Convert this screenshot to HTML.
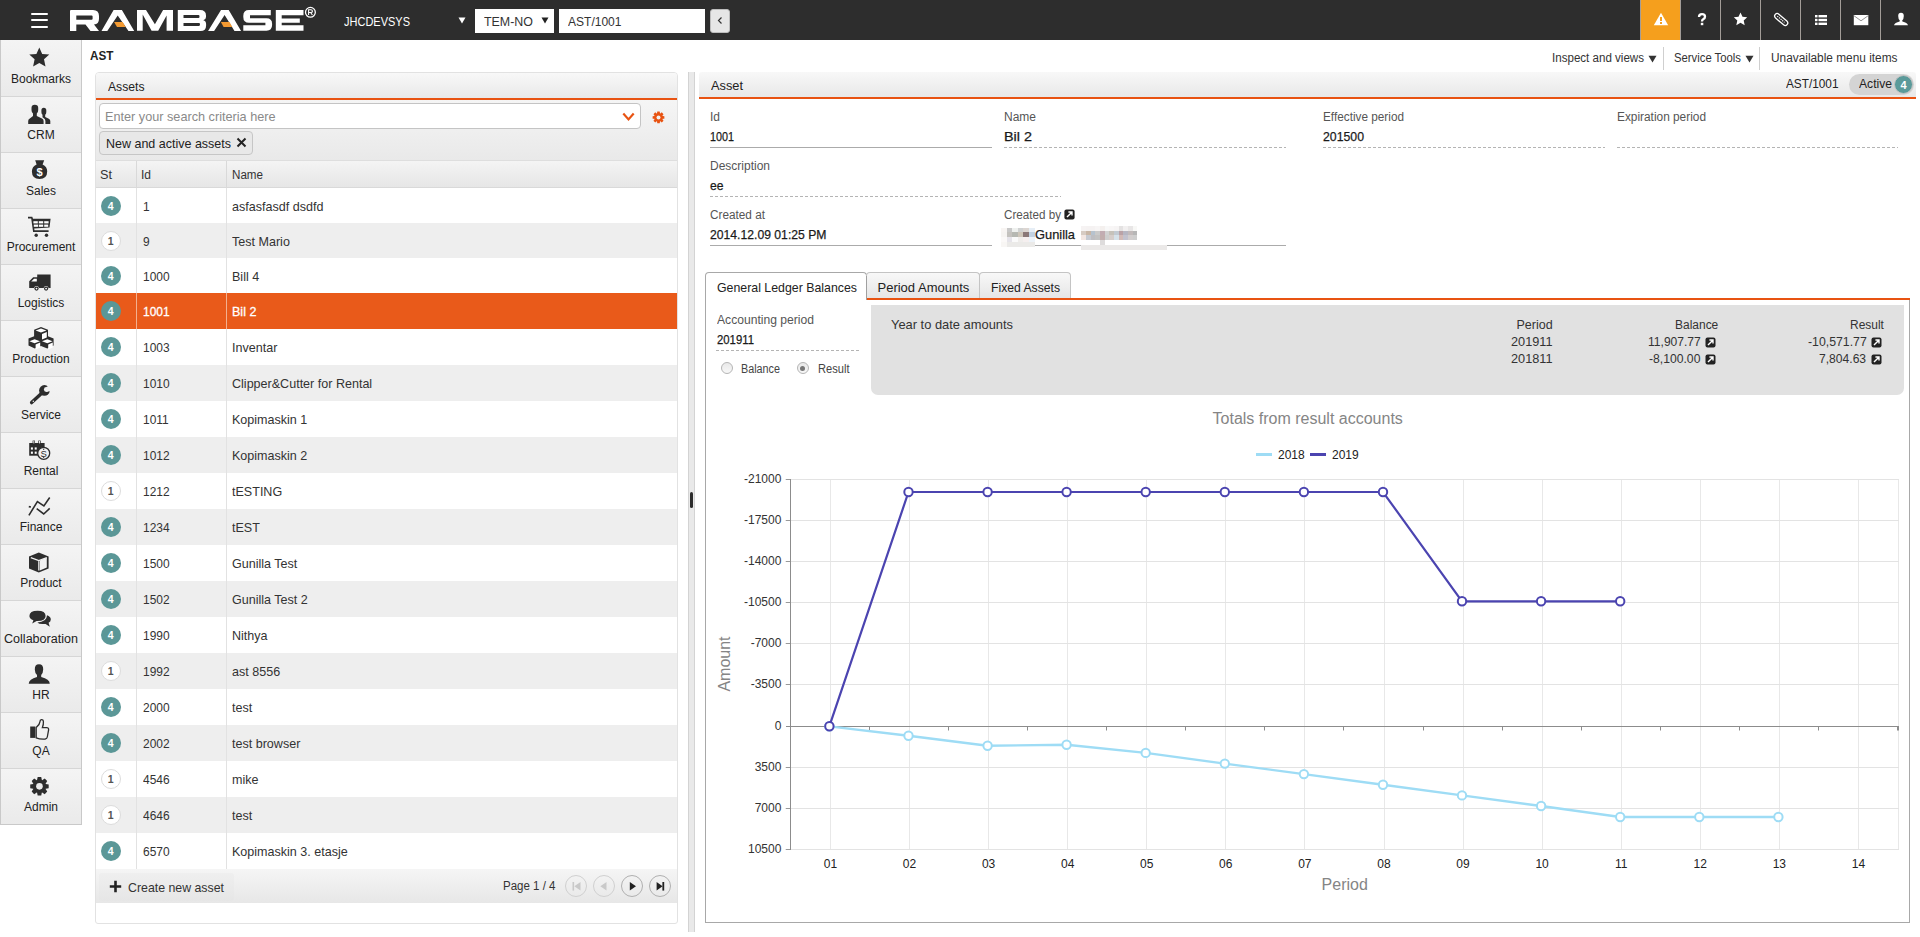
<!DOCTYPE html><html><head><meta charset='utf-8'><style>
*{box-sizing:border-box;margin:0;padding:0}
html,body{width:1920px;height:937px;overflow:hidden;background:#fff;font-family:"Liberation Sans",sans-serif;color:#333}
.a,.t,svg.s{position:absolute}
.t{white-space:pre}
</style></head><body><div class='a' style='left:0px;top:0px;width:1920px;height:40px;background:#2d2d2d'></div><div class='a' style='left:31px;top:12.6px;width:17px;height:2.1px;background:#fff;border-radius:1px'></div><div class='a' style='left:31px;top:19.1px;width:17px;height:2.1px;background:#fff;border-radius:1px'></div><div class='a' style='left:31px;top:25.6px;width:17px;height:2.1px;background:#fff;border-radius:1px'></div><svg class='s' style='left:0;top:0' width='330' height='40' viewBox='0 0 330 40'>
<g fill='#fff' fill-rule='evenodd'>
<path d='M70,11 Q70,10 71,10 L93,10 Q99,10 99,16 L99,18.8 Q99,24.2 94,24.6 L99,31 L90.5,31 L85.5,24.6 L76.3,24.6 L76.3,31 L70,31 Z M76.3,15.5 L91.6,15.5 Q92.6,15.5 92.6,16.6 L92.6,18.7 Q92.6,19.75 91.6,19.75 L76.3,19.75 Z'/>
<path d='M101.5,31 L113.6,10 L121.9,10 L134.2,31 L128.5,31 L117.7,15.5 L107.3,31 Z'/>
<path d='M137,10 L146,10 L154.9,24.2 L163.1,10 L173,10 L173,30.8 L166.6,30.8 L166.6,15.6 L158.2,30.8 L151.6,30.8 L142.7,14.4 L142.7,30.8 L137,30.8 Z'/>
<path d='M177.8,10 L200,10 Q206,10 206,15.5 L206,17 Q206,19.6 203.3,20.3 Q206.1,21.1 206.1,24 L206.1,25.5 Q206.1,31 200.5,31 L177.8,31 Z M183.5,15.1 L198.5,15.1 Q199.5,15.1 199.5,16.5 Q199.5,18 198.5,18 L183.5,18 Z M183.5,23 L199,23 Q200,23 200,24.45 Q200,25.9 199,25.9 L183.5,25.9 Z'/>
<path d='M208.1,31 L221,10 L228.7,10 L241.1,31 L234.5,31 L224.6,14.9 L214.1,31 Z'/>
<path d='M249,10 L270.8,10 L270.8,15.25 L250,15.25 L250,18.2 L266.5,18.2 Q272.1,18.2 272.1,23.7 L272.1,25 Q272.1,30.7 266.5,30.7 L243.3,30.7 L243.3,25.25 L265.4,25.25 L265.4,22.75 L249,22.75 Q243.3,22.75 243.3,17 L243.3,15.7 Q243.3,10 249,10 Z'/>
<path d='M275.8,10 L303.5,10 L303.5,15.25 L281.7,15.25 L281.7,18.4 L299.8,18.4 L299.8,22.75 L281.7,22.75 L281.7,25.25 L303.5,25.25 L303.5,30.7 L275.8,30.7 Z'/>
</g>
<g fill='#f39a32'>
<path d='M114.1,22 L122.7,22 L125.6,26.9 L117,26.9 Z'/>
<path d='M220.8,21.9 L229.4,21.9 L232.3,27 L223.6,27 Z'/>
</g>
<circle cx='310.4' cy='12.3' r='4.9' fill='none' stroke='#fff' stroke-width='1.3'/>
<path d='M308.6,15 L308.6,9.8 L311,9.8 Q312.4,9.8 312.4,11.2 Q312.4,12.5 311,12.5 L308.6,12.5 M310.6,12.5 L312.4,15' fill='none' stroke='#fff' stroke-width='1.1'/>
</svg><span class='t' style='left:344.00px;top:16px;font-size:12.5px;line-height:12.5px;color:#fff;font-weight:400;transform:scaleX(0.8796);transform-origin:0 0;'>JHCDEVSYS</span><svg class='s' style='left:458px;top:17px' width='8' height='7' viewBox='0 0 8 7'><path d='M0.5,0.5 L7.5,0.5 L4,6.5 Z' fill='#fff'/></svg><div class='a' style='left:475px;top:9px;width:79px;height:24px;background:#fff'></div><span class='t' style='left:484.00px;top:16px;font-size:12.5px;line-height:12.5px;color:#333;font-weight:400;transform:scaleX(0.9937);transform-origin:0 0;'>TEM-NO</span><svg class='s' style='left:541px;top:17px' width='8' height='7' viewBox='0 0 8 7'><path d='M0.5,0.5 L7.5,0.5 L4,6.5 Z' fill='#222'/></svg><div class='a' style='left:559px;top:9px;width:146px;height:24px;background:#fff'></div><span class='t' style='left:567.50px;top:16px;font-size:12.5px;line-height:12.5px;color:#333;font-weight:400;transform:scaleX(0.9623);transform-origin:0 0;'>AST/1001</span><div class='a' style='left:710px;top:9px;width:20px;height:24px;background:#e6e6e6;border:1px solid #bdbdbd;border-radius:3px'></div><svg class='s' style='left:716px;top:16px' width='8' height='9' viewBox='0 0 8 9'><path d='M5.5,1.5 L2.5,4.5 L5.5,7.5' fill='none' stroke='#333' stroke-width='1.2'/></svg><div class='a' style='left:1641px;top:0px;width:39px;height:40px;background:#f59f1d'></div><div class='a' style='left:1640px;top:0px;width:1px;height:40px;background:#a39d98'></div><div class='a' style='left:1680px;top:0px;width:1px;height:40px;background:#a39d98'></div><div class='a' style='left:1720px;top:0px;width:1px;height:40px;background:#a39d98'></div><div class='a' style='left:1760px;top:0px;width:1px;height:40px;background:#a39d98'></div><div class='a' style='left:1800px;top:0px;width:1px;height:40px;background:#a39d98'></div><div class='a' style='left:1840px;top:0px;width:1px;height:40px;background:#a39d98'></div><div class='a' style='left:1880px;top:0px;width:1px;height:40px;background:#a39d98'></div>
<svg class='s' style='left:1653px;top:12px' width='16' height='14' viewBox='0 0 16 14'><path d='M8,0.8 L15.2,13.2 L0.8,13.2 Z' fill='#fff'/><rect x='7' y='5' width='2' height='4' fill='#f59f1d'/><rect x='7' y='10' width='2' height='2' fill='#f59f1d'/></svg>
<svg class='s' style='left:1697px;top:13px' width='10' height='13' viewBox='0 0 10 13'><path d='M2,4 Q2,1.2 5,1.2 Q8,1.2 8,3.8 Q8,5.4 6.2,6.3 Q5,7 5,8.5' fill='none' stroke='#fff' stroke-width='2.3'/><rect x='3.8' y='9.8' width='2.5' height='2.4' fill='#fff'/></svg>
<svg class='s' style='left:1733px;top:12px' width='15' height='14' viewBox='0 0 15 14'><path d='M7.5,0.6 L9.5,4.8 L14.2,5.3 L10.7,8.4 L11.7,13.2 L7.5,10.8 L3.3,13.2 L4.3,8.4 L0.8,5.3 L5.5,4.8 Z' fill='#fff'/></svg>
<svg class='s' style='left:1772px;top:11px' width='18' height='17' viewBox='1772 11 18 17'><g transform='rotate(41 1781.2 19.5)'><rect x='1773.4' y='17' width='15.6' height='5' rx='2.5' fill='none' stroke='#fff' stroke-width='1.3'/><path d='M1776,19.5 L1785.6,19.5' stroke='#fff' stroke-width='1.1' stroke-dasharray='1.3 0.9'/></g></svg>
<svg class='s' style='left:1814px;top:14px' width='14' height='12' viewBox='0 0 14 12'><g fill='#fff'><rect x='1' y='1' width='2.5' height='2.4'/><rect x='4.5' y='1' width='8.5' height='2.4'/><rect x='1' y='4.8' width='2.5' height='2.4'/><rect x='4.5' y='4.8' width='8.5' height='2.4'/><rect x='1' y='8.6' width='2.5' height='2.4'/><rect x='4.5' y='8.6' width='8.5' height='2.4'/></g></svg>
<svg class='s' style='left:1853px;top:14px' width='16' height='12' viewBox='0 0 16 12'><rect x='0.8' y='1' width='14.5' height='10.2' fill='#fff'/><path d='M0.8,1.6 L8,6.8 L15.3,1.6' fill='none' stroke='#888' stroke-width='0.9'/></svg>
<svg class='s' style='left:1893px;top:12px' width='16' height='14' viewBox='0 0 16 14'><path d='M8,0.8 Q10.8,0.8 10.8,4 Q10.8,7 9.2,8.4 L9.4,9.4 Q14.3,10.6 15,13.2 L1,13.2 Q1.7,10.6 6.6,9.4 L6.8,8.4 Q5.2,7 5.2,4 Q5.2,0.8 8,0.8 Z' fill='#fff'/></svg>
<span class='t' style='left:1552.00px;top:52px;font-size:12px;line-height:12px;color:#333;font-weight:400;transform:scaleX(0.9645);transform-origin:0 0;'>Inspect and views</span><svg class='s' style='left:1648px;top:55px' width='9' height='8' viewBox='0 0 9 8'><path d='M0.5,0.8 L8.5,0.8 L4.5,7.5 Z' fill='#333'/></svg><div class='a' style='left:1663px;top:47px;width:1px;height:23px;background:#cfcfcf'></div><span class='t' style='left:1674.00px;top:52px;font-size:12px;line-height:12px;color:#333;font-weight:400;transform:scaleX(0.9416);transform-origin:0 0;'>Service Tools</span><svg class='s' style='left:1745px;top:55px' width='9' height='8' viewBox='0 0 9 8'><path d='M0.5,0.8 L8.5,0.8 L4.5,7.5 Z' fill='#333'/></svg><div class='a' style='left:1759px;top:47px;width:1px;height:23px;background:#cfcfcf'></div><span class='t' style='left:1771.00px;top:52px;font-size:12px;line-height:12px;color:#333;font-weight:400;transform:scaleX(0.9878);transform-origin:0 0;'>Unavailable menu items</span><span class='t' style='left:90.00px;top:49px;font-size:13px;line-height:13px;color:#222;font-weight:700;transform:scaleX(0.9038);transform-origin:0 0;'>AST</span><div class='a' style='left:0px;top:40px;width:82px;height:785px;background:#f2f2f2;border-left:1px solid #c9c9c9;border-right:1px solid #c9c9c9;border-bottom:1px solid #c9c9c9'></div><div class='a' style='left:1px;top:40px;width:80px;height:56px;background:linear-gradient(#f4f4f4,#eaeaea)'></div><div class='a' style='left:1px;top:96px;width:80px;height:1px;background:#d6d6d6'></div><span class='t' style='left:10.98px;top:73px;font-size:12px;line-height:12px;color:#222;font-weight:400;'>Bookmarks</span><div class='a' style='left:1px;top:97px;width:80px;height:55px;background:linear-gradient(#f4f4f4,#eaeaea)'></div><div class='a' style='left:1px;top:152px;width:80px;height:1px;background:#d6d6d6'></div><span class='t' style='left:27.34px;top:129px;font-size:12px;line-height:12px;color:#222;font-weight:400;'>CRM</span><div class='a' style='left:1px;top:153px;width:80px;height:55px;background:linear-gradient(#f4f4f4,#eaeaea)'></div><div class='a' style='left:1px;top:208px;width:80px;height:1px;background:#d6d6d6'></div><span class='t' style='left:25.98px;top:185px;font-size:12px;line-height:12px;color:#222;font-weight:400;'>Sales</span><div class='a' style='left:1px;top:209px;width:80px;height:55px;background:linear-gradient(#f4f4f4,#eaeaea)'></div><div class='a' style='left:1px;top:264px;width:80px;height:1px;background:#d6d6d6'></div><span class='t' style='left:6.65px;top:241px;font-size:12px;line-height:12px;color:#222;font-weight:400;'>Procurement</span><div class='a' style='left:1px;top:265px;width:80px;height:55px;background:linear-gradient(#f4f4f4,#eaeaea)'></div><div class='a' style='left:1px;top:320px;width:80px;height:1px;background:#d6d6d6'></div><span class='t' style='left:17.66px;top:297px;font-size:12px;line-height:12px;color:#222;font-weight:400;'>Logistics</span><div class='a' style='left:1px;top:321px;width:80px;height:55px;background:linear-gradient(#f4f4f4,#eaeaea)'></div><div class='a' style='left:1px;top:376px;width:80px;height:1px;background:#d6d6d6'></div><span class='t' style='left:12.31px;top:353px;font-size:12px;line-height:12px;color:#222;font-weight:400;'>Production</span><div class='a' style='left:1px;top:377px;width:80px;height:55px;background:linear-gradient(#f4f4f4,#eaeaea)'></div><div class='a' style='left:1px;top:432px;width:80px;height:1px;background:#d6d6d6'></div><span class='t' style='left:20.99px;top:409px;font-size:12px;line-height:12px;color:#222;font-weight:400;'>Service</span><div class='a' style='left:1px;top:433px;width:80px;height:55px;background:linear-gradient(#f4f4f4,#eaeaea)'></div><div class='a' style='left:1px;top:488px;width:80px;height:1px;background:#d6d6d6'></div><span class='t' style='left:23.66px;top:465px;font-size:12px;line-height:12px;color:#222;font-weight:400;'>Rental</span><div class='a' style='left:1px;top:489px;width:80px;height:55px;background:linear-gradient(#f4f4f4,#eaeaea)'></div><div class='a' style='left:1px;top:544px;width:80px;height:1px;background:#d6d6d6'></div><span class='t' style='left:19.65px;top:521px;font-size:12px;line-height:12px;color:#222;font-weight:400;'>Finance</span><div class='a' style='left:1px;top:545px;width:80px;height:55px;background:linear-gradient(#f4f4f4,#eaeaea)'></div><div class='a' style='left:1px;top:600px;width:80px;height:1px;background:#d6d6d6'></div><span class='t' style='left:20.32px;top:577px;font-size:12px;line-height:12px;color:#222;font-weight:400;'>Product</span><div class='a' style='left:1px;top:601px;width:80px;height:55px;background:linear-gradient(#f4f4f4,#eaeaea)'></div><div class='a' style='left:1px;top:656px;width:80px;height:1px;background:#d6d6d6'></div><span class='t' style='left:4.00px;top:633px;font-size:12px;line-height:12px;color:#222;font-weight:400;transform:scaleX(1.0464);transform-origin:0 0;'>Collaboration</span><div class='a' style='left:1px;top:657px;width:80px;height:55px;background:linear-gradient(#f4f4f4,#eaeaea)'></div><div class='a' style='left:1px;top:712px;width:80px;height:1px;background:#d6d6d6'></div><span class='t' style='left:32.33px;top:689px;font-size:12px;line-height:12px;color:#222;font-weight:400;'>HR</span><div class='a' style='left:1px;top:713px;width:80px;height:55px;background:linear-gradient(#f4f4f4,#eaeaea)'></div><div class='a' style='left:1px;top:768px;width:80px;height:1px;background:#d6d6d6'></div><span class='t' style='left:32.33px;top:745px;font-size:12px;line-height:12px;color:#222;font-weight:400;'>QA</span><div class='a' style='left:1px;top:769px;width:80px;height:55px;background:linear-gradient(#f4f4f4,#eaeaea)'></div><span class='t' style='left:23.99px;top:801px;font-size:12px;line-height:12px;color:#222;font-weight:400;'>Admin</span><svg class='s' style='left:0;top:40px' width='82' height='785' viewBox='0 40 82 785'>
<g fill='#2d2d2d'>
<path d='M39.3,47.6 L42.2,53.9 L49.3,54.6 L44,59.3 L45.5,66.6 L39.3,63 L33.1,66.6 L34.6,59.3 L29.3,54.6 L36.4,53.9 Z'/>
<path d='M31.5,107.8 Q31.5,104.8 34.8,104.8 Q38.2,104.8 38.2,107.8 L38.2,110 Q38.2,112.5 36.8,113.5 L36.8,116 L42,118.5 Q43.6,119.3 43.6,121 L43.6,124 L28.2,124 L28.2,121 Q28.2,119.3 29.8,118.5 L33,116 L33,113.5 Q31.5,112.5 31.5,110 Z'/>
<path d='M41.4,110.3 Q41.4,107.7 43.8,107.7 Q46.3,107.7 46.3,110.3 L46.3,112 Q46.3,114 45.2,114.8 L45.2,117 L48.8,118.8 Q50.3,119.5 50.3,121 L50.3,124 L45.4,124 L45.4,121 Q45.4,119 43.5,118 L42.5,117.3 L42.5,114.8 Q41.4,114 41.4,112 Z'/>
<path d='M35.2,160.2 L44.2,160.2 L42.6,164.6 Q47.2,166.6 47.2,171.6 Q47.2,179 39.5,179 Q31.9,179 31.9,171.6 Q31.9,166.6 36.6,164.6 Z'/>
<path d='M28,216.8 L32.3,216.8 L33,218.7 L50.6,218.7 L49.5,227.5 L34.2,228.4 L34.5,230.3 L48.6,230.3 L48.6,232 L33.1,232 L31.2,218.5 L28,218.5 Z'/>
<circle cx='36.2' cy='235.2' r='1.7'/><circle cx='46.5' cy='235.2' r='1.7'/>
<path d='M37.2,274.4 L50.6,274.4 L50.6,288 L48.6,288 A2.6,2.6 0 0 0 43.6,288 L39,288 A2.6,2.6 0 0 0 34,288 L29.2,288 L29.2,281.2 L33.2,277.2 L37.2,277.2 Z'/>
<circle cx='36.5' cy='288.6' r='2.1'/><circle cx='46.1' cy='288.6' r='2.1'/>
<path d='M41,327 L48,329.7 L48,336.2 L53.6,338.4 L53.6,345.6 L47.3,348.6 L41,345.9 L34.8,348.6 L28.5,345.6 L28.5,338.4 L34.1,336.2 L34.1,329.7 Z'/>
<line x1='31.6' y1='402.6' x2='41.4' y2='393.6' stroke='#2d2d2d' stroke-width='3.4' stroke-linecap='round'/><circle cx='44.4' cy='390.4' r='5.3'/>
<rect x='29.2' y='443' width='15.4' height='12.7'/><rect x='32.6' y='440.6' width='2.4' height='3.4'/><rect x='38.3' y='440.6' width='2.4' height='3.4'/>

<path d='M28.9,515.3 L37.4,501.6 L43.9,505.9 L49.7,497.5' fill='none' stroke='#2d2d2d' stroke-width='1.6'/>
<path d='M36.7,508.7 L43.7,514 L49.7,508.4 M28.8,506.6 L30.9,507' fill='none' stroke='#2d2d2d' stroke-width='1.6'/>
<path d='M38.8,552.6 L48.6,556.4 L48.6,568.4 L38.8,572.6 L29,568.4 L29,556.4 Z'/>
<path d='M30.8,557.6 L38.8,560.6 L46.8,557.6 M38.8,560.6 L38.8,570.4' fill='none' stroke='#f2f2f2' stroke-width='1.2'/>
<path d='M39.8,560.6 L46.8,557.8 L46.8,567.6 L39.8,570.6 Z' fill='#f2f2f2'/>
<path d='M37.6,610.8 Q45.6,610.8 45.6,616 Q45.6,621 37.6,621 L36.6,621 L32.2,623.4 L33.4,620.2 Q29.4,618.8 29.4,616 Q29.4,610.8 37.6,610.8 Z'/>
<path d='M47,615.2 Q50.8,616.4 50.8,619.4 Q50.8,621.6 48.6,622.8 L49.8,626.8 L45.6,624 L42.4,624 Q38.8,624 37.4,622.4 Q46.8,622 47,615.2 Z'/>
<path d='M39,664.2 Q43.4,664.2 43.2,669.4 Q43,673.6 41.2,675 L41.2,677 Q49.6,679 49.8,683.8 L28.7,683.8 Q29,679 37,677 L37,675 Q35,673.6 34.8,669.4 Q34.6,664.2 39,664.2 Z'/>
<path d='M35.4,726.5 L35.4,737.9 L30.2,737.9 L30.2,726.5 Z'/>
<path d='M36.2,737.8 Q40,739.4 45.2,739 Q47,738.8 47.3,737 L48.6,729.8 Q48.8,727.6 46.6,727.6 L42.4,727.6 Q43.6,724.6 43.4,721.8 Q43.2,719.4 41.4,719.6 Q40,719.8 40,721.6 Q39.8,724.4 36.2,727.6 Z' fill='#f2f2f2' stroke='#2d2d2d' stroke-width='1.3'/>

</g>
<g fill='#fff'>
<text x='39.6' y='176.4' font-family='Liberation Sans' font-weight='700' font-size='11' text-anchor='middle'>$</text>
<rect x='33.4' y='221.2' width='4.4' height='2.2'/><rect x='38.8' y='221.2' width='4.4' height='2.2'/><rect x='44.2' y='221.2' width='4.4' height='2.2'/>
<rect x='33.8' y='224.6' width='4.2' height='2.2'/><rect x='38.8' y='224.6' width='4.4' height='2.2'/><rect x='44.2' y='224.6' width='4' height='2.2'/>
<path d='M31.2,281.6 L34,278.8 L36.8,278.8 L36.8,281.6 Z'/>
<circle cx='36.5' cy='288.6' r='0.9'/><circle cx='46.1' cy='288.6' r='0.9'/>
<path d='M41,328.6 L46.4,330.6 L41,332.6 L35.6,330.6 Z M42,334 L46.8,332 L46.8,337.4 L42,339.4 Z M34.6,339.2 L40,341.2 L34.6,343.2 L29.4,341.2 Z M35.6,344.6 L40.2,342.6 L40.2,347.6 L35.6,349.6 Z M47.3,339.2 L52.6,341.2 L47.3,343.2 L42,341.2 Z M48.2,344.6 L52.8,342.6 L52.8,347.6 L48.2,349.6 Z'/>
<rect x='33.4' y='441' width='0.9' height='2.4'/><rect x='39.1' y='441' width='0.9' height='2.4'/><rect x='30.9' y='447.4' width='2' height='2.2'/><rect x='34.7' y='447.4' width='2' height='2.2'/><rect x='30.9' y='451.6' width='2' height='2.2'/><rect x='34.7' y='451.6' width='2' height='2.2'/>

</g>

<circle cx='46.3' cy='389.5' r='2.4' fill='#f2f2f2'/><path d='M46.3,387.1 L51,384.8 L52.2,390.4 L46.3,391.9 Z' fill='#f2f2f2'/><circle cx='33.3' cy='401.3' r='0.75' fill='#f2f2f2'/><circle cx='43.7' cy='453.3' r='6' fill='#f2f2f2' stroke='#2d2d2d' stroke-width='1.3'/><text x='43.7' y='456.9' font-family='Liberation Sans' font-size='9.5' text-anchor='middle' fill='#2d2d2d'>S</text><rect x='43.2' y='448.6' width='1' height='1.4' fill='#2d2d2d'/><rect x='43.2' y='456.6' width='1' height='1.4' fill='#2d2d2d'/>
<path d='M37.03,780.10 L37.67,777.12 L41.23,777.12 L41.87,780.10 L42.15,780.22 L44.72,778.57 L47.23,781.08 L45.58,783.65 L45.70,783.93 L48.68,784.57 L48.68,788.13 L45.70,788.77 L45.58,789.05 L47.23,791.62 L44.72,794.13 L42.15,792.48 L41.87,792.60 L41.23,795.58 L37.67,795.58 L37.03,792.60 L36.75,792.48 L34.18,794.13 L31.67,791.62 L33.32,789.05 L33.20,788.77 L30.22,788.13 L30.22,784.57 L33.20,783.93 L33.32,783.65 L31.67,781.08 L34.18,778.57 L36.75,780.22 Z' fill='#2d2d2d'/><circle cx='39.45' cy='786.35' r='3.3' fill='#ececec'/>
</svg><div class='a' style='left:95px;top:72px;width:583px;height:852px;background:#fff;border:1px solid #e2e2e2;border-radius:4px 4px 3px 3px'></div><div class='a' style='left:96px;top:73px;width:581px;height:25px;background:linear-gradient(#f8f8f8,#e9e9e9);border-radius:3px 3px 0 0'></div><div class='a' style='left:96px;top:98px;width:581px;height:2px;background:#e85312'></div><span class='t' style='left:108.00px;top:80px;font-size:13px;line-height:13px;color:#222;font-weight:400;transform:scaleX(0.9355);transform-origin:0 0;'>Assets</span><div class='a' style='left:96px;top:100px;width:581px;height:60px;background:linear-gradient(#f5f5f5,#e9e9e9)'></div><div class='a' style='left:99px;top:103px;width:542px;height:26px;background:#fff;border:1px solid #c4c4c4;border-radius:4px'></div><span class='t' style='left:105.00px;top:110px;font-size:13px;line-height:13px;color:#8a8a8a;font-weight:400;transform:scaleX(0.9751);transform-origin:0 0;'>Enter your search criteria here</span><svg class='s' style='left:622px;top:112px' width='13' height='10' viewBox='0 0 13 10'><path d='M1.3,1.6 L6.5,7.4 L11.7,1.6' fill='none' stroke='#e85312' stroke-width='2.2'/></svg><svg class='s' style='left:650px;top:109px' width='17' height='17' viewBox='650 109 17 17'><path d='M657.03,113.25 L657.25,111.53 L659.75,111.53 L659.97,113.25 L660.40,113.43 L661.77,112.37 L663.53,114.13 L662.47,115.50 L662.65,115.93 L664.37,116.15 L664.37,118.65 L662.65,118.87 L662.47,119.30 L663.53,120.67 L661.77,122.43 L660.40,121.37 L659.97,121.55 L659.75,123.27 L657.25,123.27 L657.03,121.55 L656.60,121.37 L655.23,122.43 L653.47,120.67 L654.53,119.30 L654.35,118.87 L652.63,118.65 L652.63,116.15 L654.35,115.93 L654.53,115.50 L653.47,114.13 L655.23,112.37 L656.60,113.43 Z' fill='#e85312'/><circle cx='658.5' cy='117.4' r='2.0' fill='#f0f0f0'/></svg><div class='a' style='left:99px;top:131px;width:154px;height:24px;background:#e8e8e8;border:1px solid #c6c6c6;border-radius:4px'></div><span class='t' style='left:106.00px;top:137px;font-size:13px;line-height:13px;color:#222;font-weight:400;transform:scaleX(0.9610);transform-origin:0 0;'>New and active assets</span><svg class='s' style='left:236px;top:137px' width='11' height='11' viewBox='0 0 11 11'><path d='M1.5,1.5 L9.5,9.5 M9.5,1.5 L1.5,9.5' fill='none' stroke='#222' stroke-width='2'/></svg><div class='a' style='left:96px;top:160px;width:581px;height:28px;background:linear-gradient(#f4f4f4,#e6e6e6);border-top:1px solid #dedede;border-bottom:1px solid #d9d9d9'></div><div class='a' style='left:136px;top:161px;width:1px;height:26px;background:#d9d9d9'></div><div class='a' style='left:226px;top:161px;width:1px;height:26px;background:#d9d9d9'></div><span class='t' style='left:100.00px;top:169px;font-size:12px;line-height:12px;color:#333;font-weight:400;transform:scaleX(1.0579);transform-origin:0 0;'>St</span><span class='t' style='left:141.00px;top:169px;font-size:12px;line-height:12px;color:#333;font-weight:400;'>Id</span><span class='t' style='left:232.00px;top:169px;font-size:12px;line-height:12px;color:#333;font-weight:400;transform:scaleX(0.9683);transform-origin:0 0;'>Name</span><div class='a' style='left:96px;top:188px;width:581px;height:35px;background:#ffffff'></div><div class='a' style='left:136px;top:188px;width:1px;height:35px;background:#e2e2e2'></div><div class='a' style='left:226px;top:188px;width:1px;height:35px;background:#e2e2e2'></div><div class='a' style='left:100.7px;top:195.50px;width:20px;height:20px;border-radius:50%;background:#5b9797'></div><span class='t' style='left:107.78px;top:200.5px;font-size:10.5px;line-height:10.5px;color:#fff;font-weight:700;'>4</span><span class='t' style='left:143.00px;top:200px;font-size:13px;line-height:13px;color:#333;font-weight:400;transform:scaleX(0.9200);transform-origin:0 0;'>1</span><span class='t' style='left:232.00px;top:200px;font-size:13px;line-height:13px;color:#333;font-weight:400;transform:scaleX(0.9650);transform-origin:0 0;'>asfasfasdf dsdfd</span><div class='a' style='left:96px;top:223px;width:581px;height:35px;background:#eeeeee'></div><div class='a' style='left:136px;top:223px;width:1px;height:35px;background:#e2e2e2'></div><div class='a' style='left:226px;top:223px;width:1px;height:35px;background:#e2e2e2'></div><div class='a' style='left:100.7px;top:230.50px;width:20px;height:20px;border-radius:50%;background:#fff;border:1px solid #dcdcdc'></div><span class='t' style='left:107.78px;top:235.5px;font-size:10.5px;line-height:10.5px;color:#555;font-weight:700;'>1</span><span class='t' style='left:143.00px;top:235px;font-size:13px;line-height:13px;color:#333;font-weight:400;transform:scaleX(0.9200);transform-origin:0 0;'>9</span><span class='t' style='left:232.00px;top:235px;font-size:13px;line-height:13px;color:#333;font-weight:400;transform:scaleX(0.9650);transform-origin:0 0;'>Test Mario</span><div class='a' style='left:96px;top:258px;width:581px;height:35px;background:#ffffff'></div><div class='a' style='left:136px;top:258px;width:1px;height:35px;background:#e2e2e2'></div><div class='a' style='left:226px;top:258px;width:1px;height:35px;background:#e2e2e2'></div><div class='a' style='left:100.7px;top:265.50px;width:20px;height:20px;border-radius:50%;background:#5b9797'></div><span class='t' style='left:107.78px;top:270.5px;font-size:10.5px;line-height:10.5px;color:#fff;font-weight:700;'>4</span><span class='t' style='left:143.00px;top:270px;font-size:13px;line-height:13px;color:#333;font-weight:400;transform:scaleX(0.9200);transform-origin:0 0;'>1000</span><span class='t' style='left:232.00px;top:270px;font-size:13px;line-height:13px;color:#333;font-weight:400;transform:scaleX(0.9650);transform-origin:0 0;'>Bill 4</span><div class='a' style='left:96px;top:293px;width:581px;height:36px;background:#e95a1a'></div><div class='a' style='left:136px;top:293px;width:1px;height:36px;background:#f3b08f'></div><div class='a' style='left:226px;top:293px;width:1px;height:36px;background:#f3b08f'></div><div class='a' style='left:100.7px;top:301.00px;width:20px;height:20px;border-radius:50%;background:#5b9797'></div><span class='t' style='left:107.78px;top:306.0px;font-size:10.5px;line-height:10.5px;color:#fff;font-weight:700;'>4</span><span class='t' style='left:143.00px;top:305px;font-size:13px;line-height:13px;color:#fff;font-weight:400;transform:scaleX(0.9200);transform-origin:0 0;-webkit-text-stroke:0.3px #fff;'>1001</span><span class='t' style='left:232.00px;top:305px;font-size:13px;line-height:13px;color:#fff;font-weight:400;transform:scaleX(0.9650);transform-origin:0 0;-webkit-text-stroke:0.3px #fff;'>Bil 2</span><div class='a' style='left:96px;top:329px;width:581px;height:36px;background:#ffffff'></div><div class='a' style='left:136px;top:329px;width:1px;height:36px;background:#e2e2e2'></div><div class='a' style='left:226px;top:329px;width:1px;height:36px;background:#e2e2e2'></div><div class='a' style='left:100.7px;top:337.00px;width:20px;height:20px;border-radius:50%;background:#5b9797'></div><span class='t' style='left:107.78px;top:342.0px;font-size:10.5px;line-height:10.5px;color:#fff;font-weight:700;'>4</span><span class='t' style='left:143.00px;top:341px;font-size:13px;line-height:13px;color:#333;font-weight:400;transform:scaleX(0.9200);transform-origin:0 0;'>1003</span><span class='t' style='left:232.00px;top:341px;font-size:13px;line-height:13px;color:#333;font-weight:400;transform:scaleX(0.9650);transform-origin:0 0;'>Inventar</span><div class='a' style='left:96px;top:365px;width:581px;height:36px;background:#eeeeee'></div><div class='a' style='left:136px;top:365px;width:1px;height:36px;background:#e2e2e2'></div><div class='a' style='left:226px;top:365px;width:1px;height:36px;background:#e2e2e2'></div><div class='a' style='left:100.7px;top:373.00px;width:20px;height:20px;border-radius:50%;background:#5b9797'></div><span class='t' style='left:107.78px;top:378.0px;font-size:10.5px;line-height:10.5px;color:#fff;font-weight:700;'>4</span><span class='t' style='left:143.00px;top:377px;font-size:13px;line-height:13px;color:#333;font-weight:400;transform:scaleX(0.9200);transform-origin:0 0;'>1010</span><span class='t' style='left:232.00px;top:377px;font-size:13px;line-height:13px;color:#333;font-weight:400;transform:scaleX(0.9650);transform-origin:0 0;'>Clipper&amp;Cutter for Rental</span><div class='a' style='left:96px;top:401px;width:581px;height:36px;background:#ffffff'></div><div class='a' style='left:136px;top:401px;width:1px;height:36px;background:#e2e2e2'></div><div class='a' style='left:226px;top:401px;width:1px;height:36px;background:#e2e2e2'></div><div class='a' style='left:100.7px;top:409.00px;width:20px;height:20px;border-radius:50%;background:#5b9797'></div><span class='t' style='left:107.78px;top:414.0px;font-size:10.5px;line-height:10.5px;color:#fff;font-weight:700;'>4</span><span class='t' style='left:143.00px;top:413px;font-size:13px;line-height:13px;color:#333;font-weight:400;transform:scaleX(0.9200);transform-origin:0 0;'>1011</span><span class='t' style='left:232.00px;top:413px;font-size:13px;line-height:13px;color:#333;font-weight:400;transform:scaleX(0.9650);transform-origin:0 0;'>Kopimaskin 1</span><div class='a' style='left:96px;top:437px;width:581px;height:36px;background:#eeeeee'></div><div class='a' style='left:136px;top:437px;width:1px;height:36px;background:#e2e2e2'></div><div class='a' style='left:226px;top:437px;width:1px;height:36px;background:#e2e2e2'></div><div class='a' style='left:100.7px;top:445.00px;width:20px;height:20px;border-radius:50%;background:#5b9797'></div><span class='t' style='left:107.78px;top:450.0px;font-size:10.5px;line-height:10.5px;color:#fff;font-weight:700;'>4</span><span class='t' style='left:143.00px;top:449px;font-size:13px;line-height:13px;color:#333;font-weight:400;transform:scaleX(0.9200);transform-origin:0 0;'>1012</span><span class='t' style='left:232.00px;top:449px;font-size:13px;line-height:13px;color:#333;font-weight:400;transform:scaleX(0.9650);transform-origin:0 0;'>Kopimaskin 2</span><div class='a' style='left:96px;top:473px;width:581px;height:36px;background:#ffffff'></div><div class='a' style='left:136px;top:473px;width:1px;height:36px;background:#e2e2e2'></div><div class='a' style='left:226px;top:473px;width:1px;height:36px;background:#e2e2e2'></div><div class='a' style='left:100.7px;top:481.00px;width:20px;height:20px;border-radius:50%;background:#fff;border:1px solid #dcdcdc'></div><span class='t' style='left:107.78px;top:486.0px;font-size:10.5px;line-height:10.5px;color:#555;font-weight:700;'>1</span><span class='t' style='left:143.00px;top:485px;font-size:13px;line-height:13px;color:#333;font-weight:400;transform:scaleX(0.9200);transform-origin:0 0;'>1212</span><span class='t' style='left:232.00px;top:485px;font-size:13px;line-height:13px;color:#333;font-weight:400;transform:scaleX(0.9650);transform-origin:0 0;'>tESTING</span><div class='a' style='left:96px;top:509px;width:581px;height:36px;background:#eeeeee'></div><div class='a' style='left:136px;top:509px;width:1px;height:36px;background:#e2e2e2'></div><div class='a' style='left:226px;top:509px;width:1px;height:36px;background:#e2e2e2'></div><div class='a' style='left:100.7px;top:517.00px;width:20px;height:20px;border-radius:50%;background:#5b9797'></div><span class='t' style='left:107.78px;top:522.0px;font-size:10.5px;line-height:10.5px;color:#fff;font-weight:700;'>4</span><span class='t' style='left:143.00px;top:521px;font-size:13px;line-height:13px;color:#333;font-weight:400;transform:scaleX(0.9200);transform-origin:0 0;'>1234</span><span class='t' style='left:232.00px;top:521px;font-size:13px;line-height:13px;color:#333;font-weight:400;transform:scaleX(0.9650);transform-origin:0 0;'>tEST</span><div class='a' style='left:96px;top:545px;width:581px;height:36px;background:#ffffff'></div><div class='a' style='left:136px;top:545px;width:1px;height:36px;background:#e2e2e2'></div><div class='a' style='left:226px;top:545px;width:1px;height:36px;background:#e2e2e2'></div><div class='a' style='left:100.7px;top:553.00px;width:20px;height:20px;border-radius:50%;background:#5b9797'></div><span class='t' style='left:107.78px;top:558.0px;font-size:10.5px;line-height:10.5px;color:#fff;font-weight:700;'>4</span><span class='t' style='left:143.00px;top:557px;font-size:13px;line-height:13px;color:#333;font-weight:400;transform:scaleX(0.9200);transform-origin:0 0;'>1500</span><span class='t' style='left:232.00px;top:557px;font-size:13px;line-height:13px;color:#333;font-weight:400;transform:scaleX(0.9650);transform-origin:0 0;'>Gunilla Test</span><div class='a' style='left:96px;top:581px;width:581px;height:36px;background:#eeeeee'></div><div class='a' style='left:136px;top:581px;width:1px;height:36px;background:#e2e2e2'></div><div class='a' style='left:226px;top:581px;width:1px;height:36px;background:#e2e2e2'></div><div class='a' style='left:100.7px;top:589.00px;width:20px;height:20px;border-radius:50%;background:#5b9797'></div><span class='t' style='left:107.78px;top:594.0px;font-size:10.5px;line-height:10.5px;color:#fff;font-weight:700;'>4</span><span class='t' style='left:143.00px;top:593px;font-size:13px;line-height:13px;color:#333;font-weight:400;transform:scaleX(0.9200);transform-origin:0 0;'>1502</span><span class='t' style='left:232.00px;top:593px;font-size:13px;line-height:13px;color:#333;font-weight:400;transform:scaleX(0.9650);transform-origin:0 0;'>Gunilla Test 2</span><div class='a' style='left:96px;top:617px;width:581px;height:36px;background:#ffffff'></div><div class='a' style='left:136px;top:617px;width:1px;height:36px;background:#e2e2e2'></div><div class='a' style='left:226px;top:617px;width:1px;height:36px;background:#e2e2e2'></div><div class='a' style='left:100.7px;top:625.00px;width:20px;height:20px;border-radius:50%;background:#5b9797'></div><span class='t' style='left:107.78px;top:630.0px;font-size:10.5px;line-height:10.5px;color:#fff;font-weight:700;'>4</span><span class='t' style='left:143.00px;top:629px;font-size:13px;line-height:13px;color:#333;font-weight:400;transform:scaleX(0.9200);transform-origin:0 0;'>1990</span><span class='t' style='left:232.00px;top:629px;font-size:13px;line-height:13px;color:#333;font-weight:400;transform:scaleX(0.9650);transform-origin:0 0;'>Nithya</span><div class='a' style='left:96px;top:653px;width:581px;height:36px;background:#eeeeee'></div><div class='a' style='left:136px;top:653px;width:1px;height:36px;background:#e2e2e2'></div><div class='a' style='left:226px;top:653px;width:1px;height:36px;background:#e2e2e2'></div><div class='a' style='left:100.7px;top:661.00px;width:20px;height:20px;border-radius:50%;background:#fff;border:1px solid #dcdcdc'></div><span class='t' style='left:107.78px;top:666.0px;font-size:10.5px;line-height:10.5px;color:#555;font-weight:700;'>1</span><span class='t' style='left:143.00px;top:665px;font-size:13px;line-height:13px;color:#333;font-weight:400;transform:scaleX(0.9200);transform-origin:0 0;'>1992</span><span class='t' style='left:232.00px;top:665px;font-size:13px;line-height:13px;color:#333;font-weight:400;transform:scaleX(0.9650);transform-origin:0 0;'>ast 8556</span><div class='a' style='left:96px;top:689px;width:581px;height:36px;background:#ffffff'></div><div class='a' style='left:136px;top:689px;width:1px;height:36px;background:#e2e2e2'></div><div class='a' style='left:226px;top:689px;width:1px;height:36px;background:#e2e2e2'></div><div class='a' style='left:100.7px;top:697.00px;width:20px;height:20px;border-radius:50%;background:#5b9797'></div><span class='t' style='left:107.78px;top:702.0px;font-size:10.5px;line-height:10.5px;color:#fff;font-weight:700;'>4</span><span class='t' style='left:143.00px;top:701px;font-size:13px;line-height:13px;color:#333;font-weight:400;transform:scaleX(0.9200);transform-origin:0 0;'>2000</span><span class='t' style='left:232.00px;top:701px;font-size:13px;line-height:13px;color:#333;font-weight:400;transform:scaleX(0.9650);transform-origin:0 0;'>test</span><div class='a' style='left:96px;top:725px;width:581px;height:36px;background:#eeeeee'></div><div class='a' style='left:136px;top:725px;width:1px;height:36px;background:#e2e2e2'></div><div class='a' style='left:226px;top:725px;width:1px;height:36px;background:#e2e2e2'></div><div class='a' style='left:100.7px;top:733.00px;width:20px;height:20px;border-radius:50%;background:#5b9797'></div><span class='t' style='left:107.78px;top:738.0px;font-size:10.5px;line-height:10.5px;color:#fff;font-weight:700;'>4</span><span class='t' style='left:143.00px;top:737px;font-size:13px;line-height:13px;color:#333;font-weight:400;transform:scaleX(0.9200);transform-origin:0 0;'>2002</span><span class='t' style='left:232.00px;top:737px;font-size:13px;line-height:13px;color:#333;font-weight:400;transform:scaleX(0.9650);transform-origin:0 0;'>test browser</span><div class='a' style='left:96px;top:761px;width:581px;height:36px;background:#ffffff'></div><div class='a' style='left:136px;top:761px;width:1px;height:36px;background:#e2e2e2'></div><div class='a' style='left:226px;top:761px;width:1px;height:36px;background:#e2e2e2'></div><div class='a' style='left:100.7px;top:769.00px;width:20px;height:20px;border-radius:50%;background:#fff;border:1px solid #dcdcdc'></div><span class='t' style='left:107.78px;top:774.0px;font-size:10.5px;line-height:10.5px;color:#555;font-weight:700;'>1</span><span class='t' style='left:143.00px;top:773px;font-size:13px;line-height:13px;color:#333;font-weight:400;transform:scaleX(0.9200);transform-origin:0 0;'>4546</span><span class='t' style='left:232.00px;top:773px;font-size:13px;line-height:13px;color:#333;font-weight:400;transform:scaleX(0.9650);transform-origin:0 0;'>mike</span><div class='a' style='left:96px;top:797px;width:581px;height:36px;background:#eeeeee'></div><div class='a' style='left:136px;top:797px;width:1px;height:36px;background:#e2e2e2'></div><div class='a' style='left:226px;top:797px;width:1px;height:36px;background:#e2e2e2'></div><div class='a' style='left:100.7px;top:805.00px;width:20px;height:20px;border-radius:50%;background:#fff;border:1px solid #dcdcdc'></div><span class='t' style='left:107.78px;top:810.0px;font-size:10.5px;line-height:10.5px;color:#555;font-weight:700;'>1</span><span class='t' style='left:143.00px;top:809px;font-size:13px;line-height:13px;color:#333;font-weight:400;transform:scaleX(0.9200);transform-origin:0 0;'>4646</span><span class='t' style='left:232.00px;top:809px;font-size:13px;line-height:13px;color:#333;font-weight:400;transform:scaleX(0.9650);transform-origin:0 0;'>test</span><div class='a' style='left:96px;top:833px;width:581px;height:36px;background:#ffffff'></div><div class='a' style='left:136px;top:833px;width:1px;height:36px;background:#e2e2e2'></div><div class='a' style='left:226px;top:833px;width:1px;height:36px;background:#e2e2e2'></div><div class='a' style='left:100.7px;top:841.00px;width:20px;height:20px;border-radius:50%;background:#5b9797'></div><span class='t' style='left:107.78px;top:846.0px;font-size:10.5px;line-height:10.5px;color:#fff;font-weight:700;'>4</span><span class='t' style='left:143.00px;top:845px;font-size:13px;line-height:13px;color:#333;font-weight:400;transform:scaleX(0.9200);transform-origin:0 0;'>6570</span><span class='t' style='left:232.00px;top:845px;font-size:13px;line-height:13px;color:#333;font-weight:400;transform:scaleX(0.9650);transform-origin:0 0;'>Kopimaskin 3. etasje</span><div class='a' style='left:96px;top:869px;width:581px;height:34px;background:linear-gradient(#f5f5f5,#e7e7e7)'></div><div class='a' style='left:99px;top:873px;width:135px;height:28px;background:linear-gradient(#efefef,#e6e6e6);border-radius:3px'></div><svg class='s' style='left:109px;top:880px' width='13' height='13' viewBox='0 0 13 13'><path d='M6.5,0.8 L6.5,12.2 M0.8,6.5 L12.2,6.5' fill='none' stroke='#222' stroke-width='2.6'/></svg><span class='t' style='left:127.50px;top:881px;font-size:13px;line-height:13px;color:#333;font-weight:400;transform:scaleX(0.9489);transform-origin:0 0;'>Create new asset</span><span class='t' style='left:502.50px;top:880px;font-size:12px;line-height:12px;color:#333;font-weight:400;transform:scaleX(0.9595);transform-origin:0 0;'>Page 1 / 4</span><div class='a' style='left:565px;top:875.4px;width:22px;height:22px;border-radius:50%;border:1px solid #d0d0d0'></div><div class='a' style='left:593px;top:875.4px;width:22px;height:22px;border-radius:50%;border:1px solid #d0d0d0'></div><div class='a' style='left:621px;top:875.4px;width:22px;height:22px;border-radius:50%;border:1px solid #b0b0b0'></div><div class='a' style='left:649px;top:875.4px;width:22px;height:22px;border-radius:50%;border:1px solid #b0b0b0'></div><svg class='s' style='left:560px;top:876px' width='115' height='22' viewBox='560 876 115 22'>
<g fill='#c9c9c9'><rect x='572.5' y='882' width='1.6' height='8.6'/><path d='M580.5,882 L580.5,890.6 L574.3,886.3 Z'/><path d='M606.5,882 L606.5,890.6 L600.3,886.3 Z'/></g>
<g fill='#222'><path d='M629.8,882 L629.8,890.6 L636,886.3 Z'/><path d='M656.6,882 L656.6,890.6 L662.6,886.3 Z'/><rect x='662.4' y='882' width='1.8' height='8.6'/></g>
</svg><div class='a' style='left:688px;top:72px;width:7px;height:860px;background:#e9e9e9;border-left:1px solid #d3d3d3;border-right:1px solid #d3d3d3'></div><div class='a' style='left:690px;top:492px;width:3px;height:16px;background:#2d2d2d;border-radius:1.5px'></div><div class='a' style='left:699px;top:72px;width:1217px;height:25px;background:linear-gradient(#f8f8f8,#e8e8e8);border-radius:3px 3px 0 0'></div><div class='a' style='left:699px;top:97px;width:1217px;height:2px;background:#e85312'></div><span class='t' style='left:711.00px;top:79px;font-size:13px;line-height:13px;color:#222;font-weight:400;transform:scaleX(0.9841);transform-origin:0 0;'>Asset</span><span class='t' style='left:1785.50px;top:78px;font-size:12.5px;line-height:12.5px;color:#222;font-weight:400;transform:scaleX(0.9444);transform-origin:0 0;'>AST/1001</span><div class='a' style='left:1849px;top:74px;width:65px;height:21px;background:#d4d4d4;border-radius:11px'></div><span class='t' style='left:1859.00px;top:78px;font-size:12.5px;line-height:12.5px;color:#222;font-weight:400;transform:scaleX(0.9693);transform-origin:0 0;'>Active</span><div class='a' style='left:1894px;top:75px;width:19px;height:19px;border-radius:50%;background:#5b9a9a;border:1px solid #c4c4c4'></div><span class='t' style='left:1900.44px;top:79.5px;font-size:11px;line-height:11px;color:#fff;font-weight:700;'>4</span><span class='t' style='left:710.00px;top:111px;font-size:12px;line-height:12px;color:#555;font-weight:400;'>Id</span><span class='t' style='left:710.00px;top:130px;font-size:13px;line-height:13px;color:#1a1a1a;font-weight:400;transform:scaleX(0.8298);transform-origin:0 0;-webkit-text-stroke:0.25px #1a1a1a;'>1001</span><div class='a' style='left:710px;top:147px;width:282px;height:1px;background:#ababab'></div><span class='t' style='left:1004.00px;top:111px;font-size:12px;line-height:12px;color:#555;font-weight:400;'>Name</span><span class='t' style='left:1004.00px;top:130px;font-size:13px;line-height:13px;color:#1a1a1a;font-weight:400;transform:scaleX(1.1069);transform-origin:0 0;-webkit-text-stroke:0.25px #1a1a1a;'>Bil 2</span><div class='a' style='left:1004px;top:147px;width:282px;height:1px;background-image:linear-gradient(90deg,#b4b4b4 0 3px,transparent 3px 5px);background-size:5px 1px'></div><span class='t' style='left:1323.00px;top:111px;font-size:12px;line-height:12px;color:#555;font-weight:400;transform:scaleX(0.9818);transform-origin:0 0;'>Effective period</span><span class='t' style='left:1323.00px;top:130px;font-size:13px;line-height:13px;color:#1a1a1a;font-weight:400;transform:scaleX(0.9449);transform-origin:0 0;-webkit-text-stroke:0.25px #1a1a1a;'>201500</span><div class='a' style='left:1323px;top:147px;width:282px;height:1px;background-image:linear-gradient(90deg,#b4b4b4 0 3px,transparent 3px 5px);background-size:5px 1px'></div><span class='t' style='left:1617.00px;top:111px;font-size:12px;line-height:12px;color:#555;font-weight:400;transform:scaleX(0.9882);transform-origin:0 0;'>Expiration period</span><div class='a' style='left:1617px;top:147px;width:281px;height:1px;background-image:linear-gradient(90deg,#b4b4b4 0 3px,transparent 3px 5px);background-size:5px 1px'></div><span class='t' style='left:710.00px;top:160px;font-size:12px;line-height:12px;color:#555;font-weight:400;'>Description</span><span class='t' style='left:710.00px;top:179px;font-size:13px;line-height:13px;color:#1a1a1a;font-weight:400;transform:scaleX(0.9330);transform-origin:0 0;-webkit-text-stroke:0.25px #1a1a1a;'>ee</span><div class='a' style='left:710px;top:196px;width:351px;height:1px;background-image:linear-gradient(90deg,#b4b4b4 0 3px,transparent 3px 5px);background-size:5px 1px'></div><span class='t' style='left:710.00px;top:209px;font-size:12px;line-height:12px;color:#555;font-weight:400;transform:scaleX(0.9813);transform-origin:0 0;'>Created at</span><span class='t' style='left:710.00px;top:228px;font-size:13px;line-height:13px;color:#1a1a1a;font-weight:400;transform:scaleX(0.9370);transform-origin:0 0;-webkit-text-stroke:0.25px #1a1a1a;'>2014.12.09 01:25 PM</span><div class='a' style='left:710px;top:245px;width:282px;height:1px;background:#ababab'></div><span class='t' style='left:1004.00px;top:209px;font-size:12px;line-height:12px;color:#555;font-weight:400;transform:scaleX(0.9710);transform-origin:0 0;'>Created by</span><svg class='s' style='left:1064px;top:209px' width='11' height='11' viewBox='0 0 11 11'><rect x='0.4' y='0.4' width='10.2' height='10.2' rx='2' fill='#222'/><path d='M3,8 L7.6,3.4 M4.4,3 L8,3 L8,6.6' fill='none' stroke='#fff' stroke-width='1.4'/></svg><div class='a' style='left:1004px;top:245px;width:282px;height:1px;background:#ababab'></div><div class='a' style='left:1001.0px;top:228.0px;width:5.8px;height:4.5px;background:#f8f5f3'></div><div class='a' style='left:1006.6px;top:228.0px;width:5.8px;height:4.5px;background:#c8c8c8'></div><div class='a' style='left:1012.2px;top:228.0px;width:5.8px;height:4.5px;background:#eef0ee'></div><div class='a' style='left:1017.8px;top:228.0px;width:5.8px;height:4.5px;background:#d0d2d2'></div><div class='a' style='left:1023.4px;top:228.0px;width:5.8px;height:4.5px;background:#dcd6d2'></div><div class='a' style='left:1029.0px;top:228.0px;width:5.8px;height:4.5px;background:#e6eef6'></div><div class='a' style='left:1001.0px;top:232.3px;width:5.8px;height:4.9px;background:#f6f4f2'></div><div class='a' style='left:1006.6px;top:232.3px;width:5.8px;height:4.9px;background:#c4c2be'></div><div class='a' style='left:1012.2px;top:232.3px;width:5.8px;height:4.9px;background:#b6b8b2'></div><div class='a' style='left:1017.8px;top:232.3px;width:5.8px;height:4.9px;background:#cec6ba'></div><div class='a' style='left:1023.4px;top:232.3px;width:5.8px;height:4.9px;background:#8a7878'></div><div class='a' style='left:1029.0px;top:232.3px;width:5.8px;height:4.9px;background:#c2d2e2'></div><div class='a' style='left:1001.0px;top:237.0px;width:5.8px;height:5.4px;background:#fbf9f8'></div><div class='a' style='left:1006.6px;top:237.0px;width:5.8px;height:5.4px;background:#e6e4ea'></div><div class='a' style='left:1012.2px;top:237.0px;width:5.8px;height:5.4px;background:#fafafa'></div><div class='a' style='left:1017.8px;top:237.0px;width:5.8px;height:5.4px;background:#efedeb'></div><div class='a' style='left:1023.4px;top:237.0px;width:5.8px;height:5.4px;background:#f5efef'></div><div class='a' style='left:1029.0px;top:237.0px;width:5.8px;height:5.4px;background:#edf3f9'></div><div class='a' style='left:1001.0px;top:242.2px;width:5.8px;height:4.9px;background:#f8f6f4'></div><div class='a' style='left:1006.6px;top:242.2px;width:5.8px;height:4.9px;background:#ebeae8'></div><div class='a' style='left:1012.2px;top:242.2px;width:5.8px;height:4.9px;background:#ebeae8'></div><div class='a' style='left:1017.8px;top:242.2px;width:5.8px;height:4.9px;background:#ebeae8'></div><div class='a' style='left:1023.4px;top:242.2px;width:5.8px;height:4.9px;background:#ebeae8'></div><div class='a' style='left:1029.0px;top:242.2px;width:5.8px;height:4.9px;background:#ebeae8'></div><span class='t' style='left:1035.00px;top:228px;font-size:13px;line-height:13px;color:#1a1a1a;font-weight:400;transform:scaleX(0.9884);transform-origin:0 0;-webkit-text-stroke:0.25px #1a1a1a;'>Gunilla</span><div class='a' style='left:1081.2px;top:226.2px;width:4.9px;height:4.9px;background:#f6f3f3'></div><div class='a' style='left:1085.9px;top:226.2px;width:4.9px;height:4.9px;background:#f5f2f2'></div><div class='a' style='left:1090.5px;top:226.2px;width:4.9px;height:4.9px;background:#f5f2f2'></div><div class='a' style='left:1095.2px;top:226.2px;width:4.9px;height:4.9px;background:#f7f5f5'></div><div class='a' style='left:1099.8px;top:226.2px;width:4.9px;height:4.9px;background:#f4f0ee'></div><div class='a' style='left:1104.5px;top:226.2px;width:4.9px;height:4.9px;background:#f8f8f8'></div><div class='a' style='left:1109.2px;top:226.2px;width:4.9px;height:4.9px;background:#f8f6f6'></div><div class='a' style='left:1113.8px;top:226.2px;width:4.9px;height:4.9px;background:#f6f4f4'></div><div class='a' style='left:1118.5px;top:226.2px;width:4.9px;height:4.9px;background:#e4e2e2'></div><div class='a' style='left:1123.1px;top:226.2px;width:4.9px;height:4.9px;background:#f2f0f0'></div><div class='a' style='left:1127.8px;top:226.2px;width:4.9px;height:4.9px;background:#e8e6e6'></div><div class='a' style='left:1132.5px;top:226.2px;width:4.9px;height:4.9px;background:#f8f8f6'></div><div class='a' style='left:1081.2px;top:230.9px;width:4.9px;height:4.4px;background:#d6cbc3'></div><div class='a' style='left:1085.9px;top:230.9px;width:4.9px;height:4.4px;background:#c8b6a6'></div><div class='a' style='left:1090.5px;top:230.9px;width:4.9px;height:4.4px;background:#b6c2ce'></div><div class='a' style='left:1095.2px;top:230.9px;width:4.9px;height:4.4px;background:#cacaca'></div><div class='a' style='left:1099.8px;top:230.9px;width:4.9px;height:4.4px;background:#c2acb2'></div><div class='a' style='left:1104.5px;top:230.9px;width:4.9px;height:4.4px;background:#d2d2d2'></div><div class='a' style='left:1109.2px;top:230.9px;width:4.9px;height:4.4px;background:#c6c2ba'></div><div class='a' style='left:1113.8px;top:230.9px;width:4.9px;height:4.4px;background:#c2cad2'></div><div class='a' style='left:1118.5px;top:230.9px;width:4.9px;height:4.4px;background:#baa2a6'></div><div class='a' style='left:1123.1px;top:230.9px;width:4.9px;height:4.4px;background:#b6b6c2'></div><div class='a' style='left:1127.8px;top:230.9px;width:4.9px;height:4.4px;background:#c2baba'></div><div class='a' style='left:1132.5px;top:230.9px;width:4.9px;height:4.4px;background:#b6b6b6'></div><div class='a' style='left:1081.2px;top:235.1px;width:4.9px;height:4.9px;background:#f2e6e2'></div><div class='a' style='left:1085.9px;top:235.1px;width:4.9px;height:4.9px;background:#c6cad2'></div><div class='a' style='left:1090.5px;top:235.1px;width:4.9px;height:4.9px;background:#bebec2'></div><div class='a' style='left:1095.2px;top:235.1px;width:4.9px;height:4.9px;background:#c2c2c2'></div><div class='a' style='left:1099.8px;top:235.1px;width:4.9px;height:4.9px;background:#c2aeae'></div><div class='a' style='left:1104.5px;top:235.1px;width:4.9px;height:4.9px;background:#cecece'></div><div class='a' style='left:1109.2px;top:235.1px;width:4.9px;height:4.9px;background:#d6cecb'></div><div class='a' style='left:1113.8px;top:235.1px;width:4.9px;height:4.9px;background:#d6e2ea'></div><div class='a' style='left:1118.5px;top:235.1px;width:4.9px;height:4.9px;background:#d2bab6'></div><div class='a' style='left:1123.1px;top:235.1px;width:4.9px;height:4.9px;background:#c2c2ce'></div><div class='a' style='left:1127.8px;top:235.1px;width:4.9px;height:4.9px;background:#d2cece'></div><div class='a' style='left:1132.5px;top:235.1px;width:4.9px;height:4.9px;background:#cecece'></div><div class='a' style='left:1100px;top:239.8px;width:4.7px;height:5.2px;background:#dedcdc'></div><div class='a' style='left:1081px;top:245px;width:86px;height:5px;background:#ebe9e8'></div><div class='a' style='left:705px;top:298px;width:1205px;height:625px;background:#fff;border:1px solid #a8a8a8;border-top:none'></div><div class='a' style='left:705px;top:272px;width:162px;height:27px;background:#fff;border:1px solid #a8a8a8;border-bottom:none;border-radius:4px 4px 0 0'></div><div class='a' style='left:866px;top:272px;width:114px;height:26px;background:linear-gradient(#f8f8f8,#e6e6e6);border:1px solid #c4c4c4;border-bottom:none;border-radius:4px 4px 0 0'></div><div class='a' style='left:866px;top:276px;width:1px;height:24px;background:#a0a0a0'></div><div class='a' style='left:979px;top:272px;width:92px;height:26px;background:linear-gradient(#f8f8f8,#e6e6e6);border:1px solid #c4c4c4;border-bottom:none;border-radius:4px 4px 0 0'></div><div class='a' style='left:867px;top:298px;width:1043px;height:2px;background:#e85312'></div><span class='t' style='left:716.50px;top:281px;font-size:13px;line-height:13px;color:#222;font-weight:400;transform:scaleX(0.9496);transform-origin:0 0;'>General Ledger Balances</span><span class='t' style='left:877.50px;top:281px;font-size:13px;line-height:13px;color:#222;font-weight:400;'>Period Amounts</span><span class='t' style='left:990.50px;top:281px;font-size:13px;line-height:13px;color:#222;font-weight:400;transform:scaleX(0.9362);transform-origin:0 0;'>Fixed Assets</span><span class='t' style='left:716.50px;top:314px;font-size:12px;line-height:12px;color:#555;font-weight:400;transform:scaleX(1.0096);transform-origin:0 0;'>Accounting period</span><span class='t' style='left:716.50px;top:333px;font-size:13px;line-height:13px;color:#1a1a1a;font-weight:400;transform:scaleX(0.8722);transform-origin:0 0;-webkit-text-stroke:0.25px #1a1a1a;'>201911</span><div class='a' style='left:716px;top:350px;width:143px;height:1px;background-image:linear-gradient(90deg,#b4b4b4 0 3px,transparent 3px 5px);background-size:5px 1px'></div><div class='a' style='left:720.8px;top:362px;width:12.4px;height:12.4px;border-radius:50%;background:linear-gradient(#e9e9e9,#f8f8f8);border:1px solid #b5b5b5'></div><div class='a' style='left:796.6px;top:362px;width:12.4px;height:12.4px;border-radius:50%;background:linear-gradient(#e9e9e9,#f8f8f8);border:1px solid #b5b5b5'></div><div class='a' style='left:800.1px;top:365.5px;width:5.4px;height:5.4px;border-radius:50%;background:#777'></div><span class='t' style='left:741.00px;top:363px;font-size:12.5px;line-height:12.5px;color:#444;font-weight:400;transform:scaleX(0.8631);transform-origin:0 0;'>Balance</span><span class='t' style='left:817.50px;top:363px;font-size:12.5px;line-height:12.5px;color:#444;font-weight:400;transform:scaleX(0.8889);transform-origin:0 0;'>Result</span><div class='a' style='left:871px;top:305px;width:1033px;height:90px;background:#e1e1e1;border-radius:0 0 7px 7px'></div><span class='t' style='left:891.00px;top:317.5px;font-size:13px;line-height:13px;color:#333;font-weight:400;transform:scaleX(0.9910);transform-origin:0 0;'>Year to date amounts</span><span class='t' style='left:1516.50px;top:319px;font-size:12.5px;line-height:12.5px;color:#333;font-weight:400;'>Period</span><span class='t' style='left:1511.00px;top:336px;font-size:12.5px;line-height:12.5px;color:#333;font-weight:400;transform:scaleX(1.0172);transform-origin:0 0;'>201911</span><span class='t' style='left:1511.00px;top:353px;font-size:12.5px;line-height:12.5px;color:#333;font-weight:400;transform:scaleX(1.0172);transform-origin:0 0;'>201811</span><span class='t' style='left:1675.00px;top:319px;font-size:12.5px;line-height:12.5px;color:#333;font-weight:400;transform:scaleX(0.9582);transform-origin:0 0;'>Balance</span><span class='t' style='left:1647.80px;top:336px;font-size:12.5px;line-height:12.5px;color:#333;font-weight:400;transform:scaleX(0.9655);transform-origin:0 0;'>11,907.77</span><span class='t' style='left:1649.20px;top:353px;font-size:12.5px;line-height:12.5px;color:#333;font-weight:400;transform:scaleX(0.9730);transform-origin:0 0;'>-8,100.00</span><span class='t' style='left:1849.60px;top:319px;font-size:12.5px;line-height:12.5px;color:#333;font-weight:400;transform:scaleX(0.9566);transform-origin:0 0;'>Result</span><span class='t' style='left:1807.60px;top:336px;font-size:12.5px;line-height:12.5px;color:#333;font-weight:400;transform:scaleX(0.9836);transform-origin:0 0;'>-10,571.77</span><span class='t' style='left:1819.30px;top:353px;font-size:12.5px;line-height:12.5px;color:#333;font-weight:400;transform:scaleX(0.9677);transform-origin:0 0;'>7,804.63</span><svg class='s' style='left:1705px;top:337px' width='11' height='11' viewBox='0 0 11 11'><rect x='0.5' y='0.5' width='10' height='10' rx='2' fill='#222'/><path d='M3,8 L7.6,3.4 M4.4,3 L8,3 L8,6.6' fill='none' stroke='#fff' stroke-width='1.4'/></svg><svg class='s' style='left:1705px;top:354px' width='11' height='11' viewBox='0 0 11 11'><rect x='0.5' y='0.5' width='10' height='10' rx='2' fill='#222'/><path d='M3,8 L7.6,3.4 M4.4,3 L8,3 L8,6.6' fill='none' stroke='#fff' stroke-width='1.4'/></svg><svg class='s' style='left:1870.5px;top:337px' width='11' height='11' viewBox='0 0 11 11'><rect x='0.5' y='0.5' width='10' height='10' rx='2' fill='#222'/><path d='M3,8 L7.6,3.4 M4.4,3 L8,3 L8,6.6' fill='none' stroke='#fff' stroke-width='1.4'/></svg><svg class='s' style='left:1870.5px;top:354px' width='11' height='11' viewBox='0 0 11 11'><rect x='0.5' y='0.5' width='10' height='10' rx='2' fill='#222'/><path d='M3,8 L7.6,3.4 M4.4,3 L8,3 L8,6.6' fill='none' stroke='#fff' stroke-width='1.4'/></svg><span class='t' style='left:1212.55px;top:411px;font-size:16px;line-height:16px;color:#858585;font-weight:400;'>Totals from result accounts</span><div class='a' style='left:1256px;top:453px;width:16px;height:3px;background:#9edcf5'></div><div class='a' style='left:1310px;top:453px;width:16px;height:3px;background:#4b44b0'></div><span class='t' style='left:1278.00px;top:449px;font-size:12px;line-height:12px;color:#222;font-weight:400;'>2018</span><span class='t' style='left:1332.00px;top:449px;font-size:12px;line-height:12px;color:#222;font-weight:400;'>2019</span><svg class='s' style='left:700px;top:470px' width='1210' height='400' viewBox='700 470 1210 400'><line x1='830.5' y1='479' x2='830.5' y2='849' stroke='#e8e8e8' stroke-width='1'/><line x1='909.5' y1='479' x2='909.5' y2='849' stroke='#e8e8e8' stroke-width='1'/><line x1='988.5' y1='479' x2='988.5' y2='849' stroke='#e8e8e8' stroke-width='1'/><line x1='1067.5' y1='479' x2='1067.5' y2='849' stroke='#e8e8e8' stroke-width='1'/><line x1='1146.5' y1='479' x2='1146.5' y2='849' stroke='#e8e8e8' stroke-width='1'/><line x1='1225.5' y1='479' x2='1225.5' y2='849' stroke='#e8e8e8' stroke-width='1'/><line x1='1304.5' y1='479' x2='1304.5' y2='849' stroke='#e8e8e8' stroke-width='1'/><line x1='1384.5' y1='479' x2='1384.5' y2='849' stroke='#e8e8e8' stroke-width='1'/><line x1='1463.5' y1='479' x2='1463.5' y2='849' stroke='#e8e8e8' stroke-width='1'/><line x1='1542.5' y1='479' x2='1542.5' y2='849' stroke='#e8e8e8' stroke-width='1'/><line x1='1621.5' y1='479' x2='1621.5' y2='849' stroke='#e8e8e8' stroke-width='1'/><line x1='1700.5' y1='479' x2='1700.5' y2='849' stroke='#e8e8e8' stroke-width='1'/><line x1='1779.5' y1='479' x2='1779.5' y2='849' stroke='#e8e8e8' stroke-width='1'/><line x1='1858.5' y1='479' x2='1858.5' y2='849' stroke='#e8e8e8' stroke-width='1'/><line x1='1898.5' y1='479' x2='1898.5' y2='849' stroke='#e8e8e8' stroke-width='1'/><line x1='785' y1='479.5' x2='1899' y2='479.5' stroke='#e3e3e3' stroke-width='1'/><line x1='786' y1='479.5' x2='790' y2='479.5' stroke='#999' stroke-width='1'/><line x1='785' y1='520.5' x2='1899' y2='520.5' stroke='#e3e3e3' stroke-width='1'/><line x1='786' y1='520.5' x2='790' y2='520.5' stroke='#999' stroke-width='1'/><line x1='785' y1='561.5' x2='1899' y2='561.5' stroke='#e3e3e3' stroke-width='1'/><line x1='786' y1='561.5' x2='790' y2='561.5' stroke='#999' stroke-width='1'/><line x1='785' y1='602.5' x2='1899' y2='602.5' stroke='#e3e3e3' stroke-width='1'/><line x1='786' y1='602.5' x2='790' y2='602.5' stroke='#999' stroke-width='1'/><line x1='785' y1='643.5' x2='1899' y2='643.5' stroke='#e3e3e3' stroke-width='1'/><line x1='786' y1='643.5' x2='790' y2='643.5' stroke='#999' stroke-width='1'/><line x1='785' y1='684.5' x2='1899' y2='684.5' stroke='#e3e3e3' stroke-width='1'/><line x1='786' y1='684.5' x2='790' y2='684.5' stroke='#999' stroke-width='1'/><line x1='785' y1='767.5' x2='1899' y2='767.5' stroke='#e3e3e3' stroke-width='1'/><line x1='786' y1='767.5' x2='790' y2='767.5' stroke='#999' stroke-width='1'/><line x1='785' y1='808.5' x2='1899' y2='808.5' stroke='#e3e3e3' stroke-width='1'/><line x1='786' y1='808.5' x2='790' y2='808.5' stroke='#999' stroke-width='1'/><line x1='785' y1='849.5' x2='1899' y2='849.5' stroke='#e3e3e3' stroke-width='1'/><line x1='786' y1='849.5' x2='790' y2='849.5' stroke='#999' stroke-width='1'/><line x1='786' y1='726.5' x2='1899' y2='726.5' stroke='#8c8c8c' stroke-width='1'/><line x1='869.5' y1='726.5' x2='869.5' y2='730.5' stroke='#8c8c8c' stroke-width='1'/><line x1='948.5' y1='726.5' x2='948.5' y2='730.5' stroke='#8c8c8c' stroke-width='1'/><line x1='1027.5' y1='726.5' x2='1027.5' y2='730.5' stroke='#8c8c8c' stroke-width='1'/><line x1='1106.5' y1='726.5' x2='1106.5' y2='730.5' stroke='#8c8c8c' stroke-width='1'/><line x1='1185.5' y1='726.5' x2='1185.5' y2='730.5' stroke='#8c8c8c' stroke-width='1'/><line x1='1264.5' y1='726.5' x2='1264.5' y2='730.5' stroke='#8c8c8c' stroke-width='1'/><line x1='1343.5' y1='726.5' x2='1343.5' y2='730.5' stroke='#8c8c8c' stroke-width='1'/><line x1='1423.5' y1='726.5' x2='1423.5' y2='730.5' stroke='#8c8c8c' stroke-width='1'/><line x1='1502.5' y1='726.5' x2='1502.5' y2='730.5' stroke='#8c8c8c' stroke-width='1'/><line x1='1581.5' y1='726.5' x2='1581.5' y2='730.5' stroke='#8c8c8c' stroke-width='1'/><line x1='1660.5' y1='726.5' x2='1660.5' y2='730.5' stroke='#8c8c8c' stroke-width='1'/><line x1='1739.5' y1='726.5' x2='1739.5' y2='730.5' stroke='#8c8c8c' stroke-width='1'/><line x1='1818.5' y1='726.5' x2='1818.5' y2='730.5' stroke='#8c8c8c' stroke-width='1'/><line x1='1897.5' y1='726.5' x2='1897.5' y2='730.5' stroke='#8c8c8c' stroke-width='1'/><line x1='1898.5' y1='726.5' x2='1898.5' y2='730.5' stroke='#8c8c8c' stroke-width='1'/><line x1='790.5' y1='479' x2='790.5' y2='850' stroke='#8c8c8c' stroke-width='1'/><polyline points='829.4,726.4 908.5,735.7 987.6,745.8 1066.6,744.7 1145.7,752.9 1224.8,763.6 1303.9,774.1 1383.0,784.7 1462.0,795.4 1541.1,806.0 1620.2,817.0 1699.3,817.0 1778.4,817.0' fill='none' stroke='#9edcf5' stroke-width='2.4'/><circle cx='829.4' cy='726.4' r='4.2' fill='#fff' stroke='#9edcf5' stroke-width='2'/><circle cx='908.5' cy='735.7' r='4.2' fill='#fff' stroke='#9edcf5' stroke-width='2'/><circle cx='987.6' cy='745.8' r='4.2' fill='#fff' stroke='#9edcf5' stroke-width='2'/><circle cx='1066.6' cy='744.7' r='4.2' fill='#fff' stroke='#9edcf5' stroke-width='2'/><circle cx='1145.7' cy='752.9' r='4.2' fill='#fff' stroke='#9edcf5' stroke-width='2'/><circle cx='1224.8' cy='763.6' r='4.2' fill='#fff' stroke='#9edcf5' stroke-width='2'/><circle cx='1303.9' cy='774.1' r='4.2' fill='#fff' stroke='#9edcf5' stroke-width='2'/><circle cx='1383.0' cy='784.7' r='4.2' fill='#fff' stroke='#9edcf5' stroke-width='2'/><circle cx='1462.0' cy='795.4' r='4.2' fill='#fff' stroke='#9edcf5' stroke-width='2'/><circle cx='1541.1' cy='806.0' r='4.2' fill='#fff' stroke='#9edcf5' stroke-width='2'/><circle cx='1620.2' cy='817.0' r='4.2' fill='#fff' stroke='#9edcf5' stroke-width='2'/><circle cx='1699.3' cy='817.0' r='4.2' fill='#fff' stroke='#9edcf5' stroke-width='2'/><circle cx='1778.4' cy='817.0' r='4.2' fill='#fff' stroke='#9edcf5' stroke-width='2'/><polyline points='829.4,726.2 908.5,492.0 987.6,492.0 1066.6,492.0 1145.7,492.0 1224.8,492.0 1303.9,492.0 1383.0,492.0 1462.0,601.3 1541.1,601.3 1620.2,601.3' fill='none' stroke='#4b44b0' stroke-width='2.2'/><circle cx='829.4' cy='726.2' r='4.2' fill='#fff' stroke='#4b44b0' stroke-width='2'/><circle cx='908.5' cy='492.0' r='4.2' fill='#fff' stroke='#4b44b0' stroke-width='2'/><circle cx='987.6' cy='492.0' r='4.2' fill='#fff' stroke='#4b44b0' stroke-width='2'/><circle cx='1066.6' cy='492.0' r='4.2' fill='#fff' stroke='#4b44b0' stroke-width='2'/><circle cx='1145.7' cy='492.0' r='4.2' fill='#fff' stroke='#4b44b0' stroke-width='2'/><circle cx='1224.8' cy='492.0' r='4.2' fill='#fff' stroke='#4b44b0' stroke-width='2'/><circle cx='1303.9' cy='492.0' r='4.2' fill='#fff' stroke='#4b44b0' stroke-width='2'/><circle cx='1383.0' cy='492.0' r='4.2' fill='#fff' stroke='#4b44b0' stroke-width='2'/><circle cx='1462.0' cy='601.3' r='4.2' fill='#fff' stroke='#4b44b0' stroke-width='2'/><circle cx='1541.1' cy='601.3' r='4.2' fill='#fff' stroke='#4b44b0' stroke-width='2'/><circle cx='1620.2' cy='601.3' r='4.2' fill='#fff' stroke='#4b44b0' stroke-width='2'/></svg><span class='t' style='left:744.02px;top:473px;font-size:12px;line-height:12px;color:#333;font-weight:400;'>-21000</span><span class='t' style='left:744.02px;top:514px;font-size:12px;line-height:12px;color:#333;font-weight:400;'>-17500</span><span class='t' style='left:744.02px;top:555px;font-size:12px;line-height:12px;color:#333;font-weight:400;'>-14000</span><span class='t' style='left:744.02px;top:596px;font-size:12px;line-height:12px;color:#333;font-weight:400;'>-10500</span><span class='t' style='left:750.70px;top:637px;font-size:12px;line-height:12px;color:#333;font-weight:400;'>-7000</span><span class='t' style='left:750.70px;top:678px;font-size:12px;line-height:12px;color:#333;font-weight:400;'>-3500</span><span class='t' style='left:774.71px;top:720px;font-size:12px;line-height:12px;color:#333;font-weight:400;'>0</span><span class='t' style='left:754.70px;top:761px;font-size:12px;line-height:12px;color:#333;font-weight:400;'>3500</span><span class='t' style='left:754.70px;top:802px;font-size:12px;line-height:12px;color:#333;font-weight:400;'>7000</span><span class='t' style='left:748.02px;top:843px;font-size:12px;line-height:12px;color:#333;font-weight:400;'>10500</span><span class='t' style='left:823.72px;top:858px;font-size:12px;line-height:12px;color:#222;font-weight:400;'>01</span><span class='t' style='left:902.80px;top:858px;font-size:12px;line-height:12px;color:#222;font-weight:400;'>02</span><span class='t' style='left:981.88px;top:858px;font-size:12px;line-height:12px;color:#222;font-weight:400;'>03</span><span class='t' style='left:1060.96px;top:858px;font-size:12px;line-height:12px;color:#222;font-weight:400;'>04</span><span class='t' style='left:1140.04px;top:858px;font-size:12px;line-height:12px;color:#222;font-weight:400;'>05</span><span class='t' style='left:1219.12px;top:858px;font-size:12px;line-height:12px;color:#222;font-weight:400;'>06</span><span class='t' style='left:1298.20px;top:858px;font-size:12px;line-height:12px;color:#222;font-weight:400;'>07</span><span class='t' style='left:1377.28px;top:858px;font-size:12px;line-height:12px;color:#222;font-weight:400;'>08</span><span class='t' style='left:1456.36px;top:858px;font-size:12px;line-height:12px;color:#222;font-weight:400;'>09</span><span class='t' style='left:1535.44px;top:858px;font-size:12px;line-height:12px;color:#222;font-weight:400;'>10</span><span class='t' style='left:1614.97px;top:858px;font-size:12px;line-height:12px;color:#222;font-weight:400;'>11</span><span class='t' style='left:1693.60px;top:858px;font-size:12px;line-height:12px;color:#222;font-weight:400;'>12</span><span class='t' style='left:1772.68px;top:858px;font-size:12px;line-height:12px;color:#222;font-weight:400;'>13</span><span class='t' style='left:1851.76px;top:858px;font-size:12px;line-height:12px;color:#222;font-weight:400;'>14</span><span class='t' style='left:1321.58px;top:877px;font-size:16px;line-height:16px;color:#858585;font-weight:400;'>Period</span><div class='t' style='left:697px;top:656px;width:56px;height:16px;font-size:16px;line-height:16px;color:#858585;transform:rotate(-90deg);transform-origin:50% 50%;text-align:center'>Amount</div></body></html>
